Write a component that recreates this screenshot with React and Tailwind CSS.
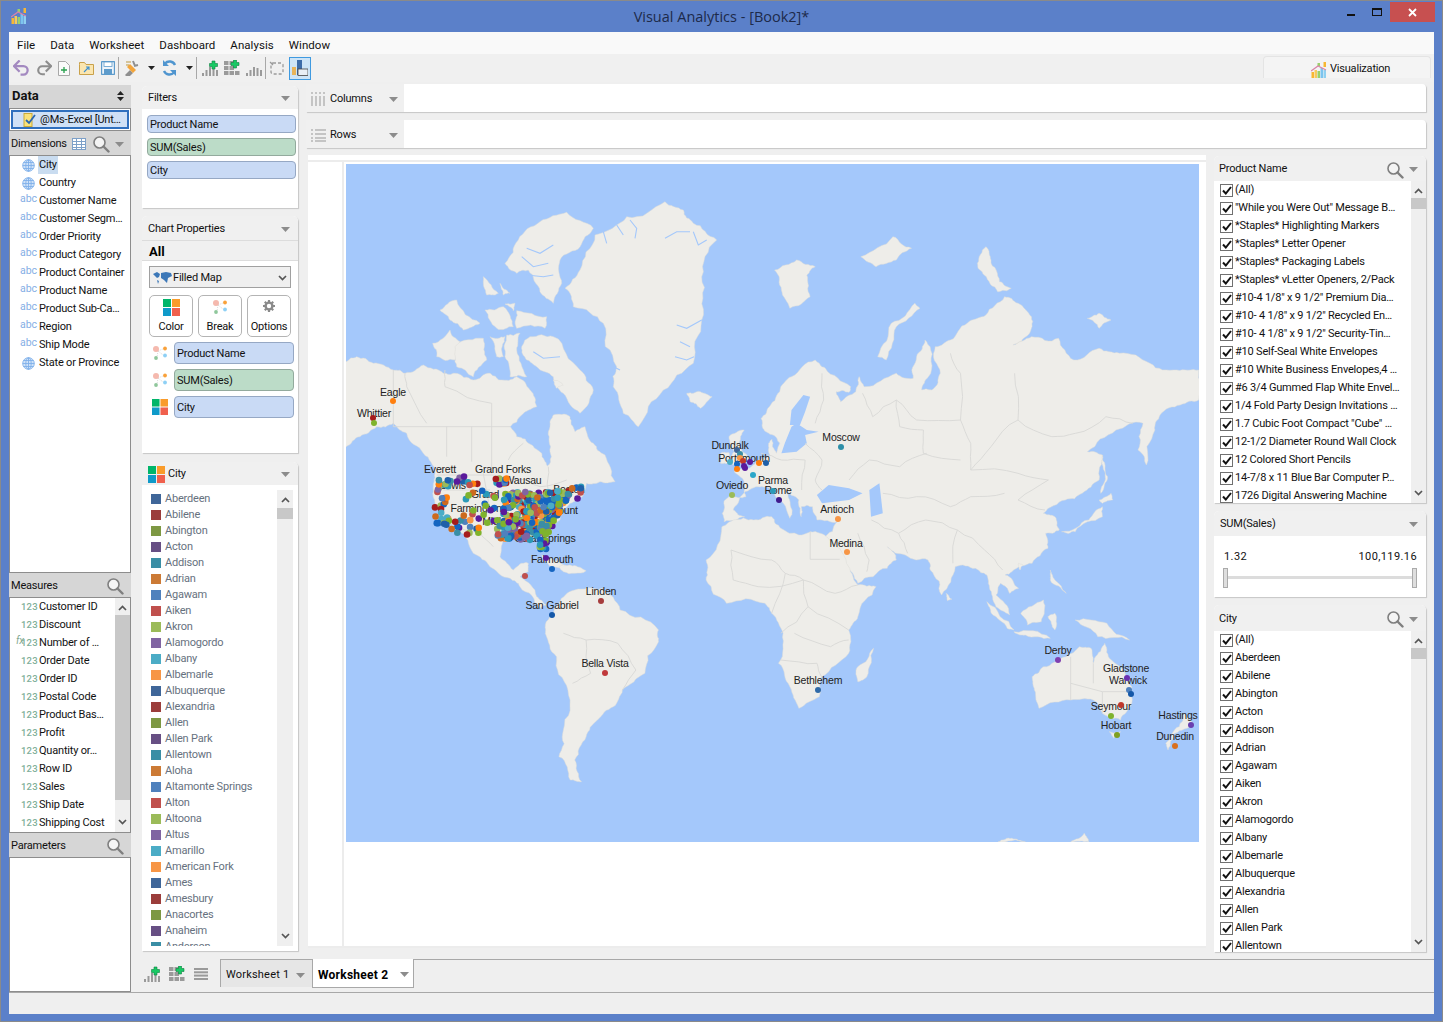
import React from 'react';

const z6 = (p) => p.map(([x, y]) => [340 + x / 3, 160 + y / 3]);
const z7 = (p) => p.map(([x, y]) => [400 + x / 3, 440 + y / 3]);
const z9 = (p) => p.map(([x, y]) => [680 + x * 0.338, 160 + y / 3]);
const z10 = (p) => p.map(([x, y]) => [500 + x * 0.4529, 500 + y / 3]);
const pts = (p) => p.map(([x, y]) => `${x.toFixed(1)},${y.toFixed(1)}`).join(' ');

const makeRnd = (start) => {
  let seed = start;
  return () => {
    seed = (seed * 16807) % 2147483647;
    return seed / 2147483647;
  };
};

// breaks straight edges into a coast-like line, same result on every run
const rough = (p, closed, levels, amp, rnd) => {
  let cur = p;
  for (let l = 0; l < levels; l++) {
    const next = [];
    const n = closed ? cur.length : cur.length - 1;
    for (let i = 0; i < n; i++) {
      const a = cur[i];
      const b = cur[(i + 1) % cur.length];
      const dx = b[0] - a[0];
      const dy = b[1] - a[1];
      const k = (rnd() - 0.5) * 2 * amp;
      next.push(a, [(a[0] + b[0]) / 2 - dy * k, (a[1] + b[1]) / 2 + dx * k]);
    }
    if (!closed) next.push(cur[cur.length - 1]);
    cur = next;
  }
  return cur;
};

const LAND_SHAPES = [
  // north + central america
  [
    ...z6([[18, 605], [50, 590], [100, 610], [160, 630], [195, 640], [250, 615], [310, 640], [345, 640], [400, 660], [450, 640], [480, 660], [530, 650], [570, 690], [590, 740], [545, 765], [510, 800], [530, 830], [575, 855], [605, 880], [622, 918], [632, 860], [630, 800], [640, 765], [690, 770], [705, 815], [735, 800], [760, 850], [795, 885], [825, 965]]),
    ...z7([[600, 125], [560, 130], [550, 165], [510, 190], [480, 240], [450, 270], [430, 290], [445, 335], [425, 310], [405, 285], [350, 290], [310, 300], [300, 350], [340, 390], [375, 368], [385, 370], [385, 395], [360, 410], [410, 470], [440, 495], [420, 505], [360, 440], [330, 415], [270, 380], [220, 340], [175, 270], [135, 240], [105, 190], [100, 150], [105, 100]]),
    ...z6([[250, 880], [200, 820], [160, 790], [110, 800], [60, 830], [18, 860]]),
  ],
  z7([[425, 345], [480, 368], [525, 392], [470, 382], [430, 362]]),
  z10([[130, 200], [160, 198], [190, 212], [140, 215]]),
  // south america
  z10([[100, 375], [130, 310], [165, 270], [225, 265], [265, 330], [350, 390], [350, 425], [320, 520], [270, 570], [250, 620], [215, 660], [190, 710], [165, 780], [180, 845], [155, 840], [130, 770], [140, 690], [150, 570], [125, 470], [100, 400]]),
  // greenland
  z6([[675, 385], [720, 330], [765, 225], [860, 170], [975, 125], [1030, 150], [1060, 190], [1130, 240], [1085, 350], [1085, 480], [1060, 610], [970, 690], [895, 800], [850, 760], [820, 680], [830, 620], [790, 490], [700, 440]]),
  // canadian arctic
  z6([[495, 310], [535, 240], [600, 185], [680, 157], [760, 205], [720, 260], [660, 300], [665, 370], [640, 430], [600, 395], [565, 330], [530, 340]]),
  z6([[300, 450], [350, 420], [420, 490], [370, 510], [330, 480]]),
  z6([[278, 550], [330, 510], [360, 545], [345, 600], [290, 590]]),
  z6([[345, 560], [430, 535], [440, 600], [400, 650], [350, 620]]),
  z6([[430, 350], [475, 400], [440, 405]]),
  z6([[480, 370], [510, 400], [490, 405]]),
  z6([[435, 450], [490, 440], [520, 500], [470, 505]]),
  z6([[495, 432], [525, 430], [520, 452]]),
  z6([[530, 452], [620, 470], [615, 505], [530, 505]]),
  z6([[450, 530], [495, 530], [490, 590], [470, 590]]),
  z6([[500, 525], [540, 520], [530, 570], [560, 650], [510, 650], [495, 590]]),
  z6([[545, 560], [570, 530], [640, 530], [720, 630], [760, 690], [720, 760], [670, 700], [640, 650], [590, 620], [560, 600]]),
  z6([[640, 660], [670, 675], [650, 685]]),
  // eurasia
  [
    ...z9([[130, 1025], [150, 1005], [195, 1010], [190, 965], [160, 935], [205, 925], [225, 905], [265, 885], [262, 850], [272, 838], [285, 880], [295, 850], [275, 825], [245, 805], [240, 775], [260, 745], [295, 695], [330, 650], [400, 600], [430, 625], [505, 680], [500, 697], [462, 695], [475, 725], [520, 695], [530, 650], [545, 680], [640, 640], [690, 655], [700, 590], [725, 540], [740, 560], [735, 650], [715, 690], [745, 690], [770, 640], [755, 560], [800, 540], [850, 490], [905, 465], [960, 410], [1000, 430], [1040, 470], [1030, 525], [985, 555], [1040, 530], [1120, 535], [1165, 600], [1240, 565], [1300, 580], [1390, 610], [1470, 630], [1535, 630], [1535, 720], [1480, 735], [1420, 765], [1405, 810], [1380, 915], [1355, 870], [1370, 790], [1290, 810], [1205, 875], [1250, 885], [1240, 960], [1190, 1000], [1140, 1020], [1075, 1060]]),
    ...z10([[1225, 50], [1235, 90], [1220, 100], [1205, 100], [1210, 145], [1175, 190], [1130, 215], [1115, 225], [1145, 265], [1125, 280], [1105, 250], [1095, 285], [1125, 345], [1105, 330], [1085, 275], [1075, 225], [1050, 205], [1005, 200], [975, 285], [950, 210], [945, 180], [895, 165], [855, 140], [875, 180], [855, 205], [790, 250], [760, 195], [740, 150], [715, 115], [745, 65], [700, 60], [690, 20], [665, 20], [665, 50], [660, 0], [630, -30], [645, 30], [640, 55], [600, -30], [570, -40], [535, -15], [515, 30], [540, 50], [495, 65], [495, 15]]),
  ],
  z9([[145, 830], [190, 810], [175, 850], [205, 895], [190, 908], [130, 908], [160, 875]]),
  z9([[120, 880], [145, 878], [142, 910], [120, 910]]),
  z9([[20, 700], [60, 695], [95, 710], [60, 745], [30, 725]]),
  z9([[280, 330], [345, 300], [400, 320], [375, 345], [385, 410], [325, 445], [300, 390]]),
  z9([[535, 290], [630, 230], [685, 265], [640, 300], [580, 320]]),
  z9([[585, 590], [625, 490], [695, 430], [710, 445], [640, 500], [610, 600]]),
  z9([[880, 310], [905, 260], [920, 300], [945, 365], [980, 385], [940, 395], [900, 345]]),
  z9([[1205, 475], [1240, 460], [1275, 480], [1240, 505]]),
  z9([[1250, 885], [1265, 950], [1245, 1000], [1258, 950]]),
  z9([[1240, 1020], [1275, 1000], [1280, 1020], [1250, 1030]]),
  z10([[1240, 95], [1300, 60], [1330, 20], [1330, 50], [1270, 95]]),
  // africa + madagascar
  z10([[455, 180], [490, 80], [515, 60], [560, 60], [600, 50], [620, 85], [660, 105], [685, 95], [725, 115], [765, 190], [790, 255], [830, 260], [790, 350], [770, 390], [770, 460], [710, 530], [705, 590], [660, 625], [640, 560], [615, 490], [625, 400], [600, 340], [585, 310], [500, 310], [455, 240]]),
  z10([[790, 500], [825, 445], [810, 530], [790, 545]]),
  // australasia
  z10([[1175, 530], [1200, 500], [1250, 470], [1280, 440], [1305, 445], [1310, 490], [1330, 440], [1335, 430], [1350, 480], [1395, 560], [1395, 610], [1370, 660], [1330, 640], [1310, 600], [1260, 600], [1190, 625], [1180, 570]]),
  z10([[1345, 695], [1370, 695], [1355, 715]]),
  z10([[1510, 640], [1530, 670], [1490, 700], [1475, 750], [1470, 730], [1500, 680]]),
  z10([[1075, 305], [1135, 390], [1120, 385], [1085, 340]]),
  z10([[1135, 395], [1215, 415], [1160, 405]]),
  z10([[1150, 340], [1200, 300], [1195, 365], [1165, 375]]),
  z10([[1210, 350], [1225, 340], [1225, 390]]),
  z10([[1270, 360], [1340, 370], [1390, 420], [1320, 410]]),
  z10([[1215, 210], [1225, 240], [1250, 280], [1215, 240]]),
  z10([[985, 280], [998, 298], [988, 302]]),
  z10([[1145, 190], [1155, 195], [1148, 210]]),
  z10([[1100, 1025], [1130, 1015], [1160, 1025]]),
  z10([[1260, 1025], [1290, 1000], [1300, 1025]]),
];

const WATER = [
  z9([[300, 880], [345, 875], [375, 850], [370, 825], [410, 815], [375, 810], [345, 790], [330, 800], [310, 850]]),
  z9([[325, 795], [330, 750], [365, 705], [385, 710], [370, 755], [355, 795]]),
  z9([[405, 1005], [440, 975], [500, 985], [540, 1000], [500, 1020], [420, 1030]]),
  z9([[560, 990], [590, 970], [600, 1060], [565, 1070]]),
];

// water-coloured inlets cut into the coasts
const FJORDS = [
  z6([[975, 235], [1010, 215], [1050, 215]]),
  z6([[870, 180], [890, 205], [885, 235]]),
  z6([[830, 195], [850, 225]]),
  z6([[790, 215], [800, 250]]),
  z6([[1060, 215], [1075, 255], [1100, 240]]),
  z6([[1005, 590], [1040, 600], [1062, 590]]),
  z6([[1020, 545], [1050, 560]]),
  z6([[1010, 495], [1040, 505], [1085, 480]]),
  z6([[810, 615], [840, 630]]),
  z6([[560, 265], [600, 280], [640, 255]]),
  z6([[545, 290], [580, 320], [625, 310]]),
  z6([[560, 345], [610, 350], [640, 345]]),
  z6([[580, 575], [610, 595], [660, 590]]),
];

const STRAIGHT_BORDERS = [
  z6([[160, 630], [160, 800], [510, 800]]),
  z6([[320, 800], [320, 890]]),
  z6([[395, 800], [395, 905]]),
  z6([[455, 730], [455, 940]]),
  z6([[290, 945], [460, 945]]),
  z7([[130, 150], [270, 150]]),
  z7([[250, 100], [270, 210]]),
  z10([[685, 95], [685, 178], [750, 178]]),
  z10([[1260, 470], [1260, 600]]),
  z10([[1260, 550], [1330, 575], [1395, 575]]),
  z10([[1330, 575], [1330, 640]]),
  z10([[1310, 490], [1310, 550]]),
];

const WAVY_BORDERS = [
  z6([[315, 630], [315, 680], [455, 730]]),
  z6([[195, 640], [200, 680], [260, 790]]),
  z6([[505, 900], [550, 850]]),
  z6([[625, 920], [625, 990]]),
  z6([[460, 945], [560, 960], [600, 980], [680, 960]]),
  z7([[120, 235], [180, 265], [240, 280], [280, 320]]),
  z9([[420, 640], [425, 720], [400, 790]]),
  z9([[370, 850], [420, 900], [400, 960], [420, 990]]),
  z9([[540, 700], [570, 770], [640, 720], [700, 780], [830, 780], [860, 850], [860, 930]]),
  z9([[640, 720], [650, 800], [720, 810], [720, 880], [830, 900]]),
  z9([[990, 640], [1000, 780], [1100, 830], [1170, 820], [1260, 770], [1340, 790]]),
  z9([[830, 780], [830, 640], [800, 580]]),
  z9([[1000, 780], [920, 860], [860, 930], [1000, 940], [1090, 960], [1000, 1020], [1080, 1050]]),
  z9([[500, 960], [560, 900], [650, 920], [730, 880]]),
  z9([[600, 1000], [700, 1010], [800, 1040], [860, 1010], [960, 1000]]),
  z9([[240, 880], [300, 900], [370, 900], [360, 990]]),
  z10([[820, 60], [880, 100], [940, 60], [1010, 90], [1070, 150], [1110, 210]]),
  z10([[880, 100], [900, 160]]),
  z10([[1010, 90], [1000, 190]]),
  z10([[790, 100], [815, 180], [810, 215]]),
  z10([[510, 150], [600, 180], [630, 220], [600, 340]]),
  z10([[510, 150], [515, 240], [570, 260], [670, 240], [740, 280], [790, 255]]),
  z10([[630, 220], [670, 240], [680, 320], [620, 400]]),
  z10([[680, 320], [770, 390]]),
  z10([[620, 480], [700, 490], [710, 530]]),
  z10([[650, 400], [730, 440], [770, 420]]),
  z10([[140, 400], [190, 420], [200, 520], [160, 550]]),
  z10([[190, 420], [260, 430], [300, 510], [270, 570]]),
];

const coastRnd = makeRnd(4099);
const LAND = LAND_SHAPES.map((p) => rough(p, true, 3, 0.13, coastRnd));
const BORDERS = [...STRAIGHT_BORDERS, ...WAVY_BORDERS.map((p) => rough(p, false, 2, 0.08, coastRnd))];

const DOT_COLORS = ['#1565c0', '#ff7f0e', '#a61c1c', '#5a1a9c', '#7fb32d', '#2b9ab8', '#c0504d', '#4f81bd', '#f79646', '#8064a2', '#9bbb59', '#1f5fa8', '#cc6a1e', '#3a8ea5', '#2b9ab8', '#7fb32d', '#1565c0', '#4bacc6'];

// a fixed scatter for the dense city cluster over the US
const buildUsDots = () => {
  const rnd = makeRnd(73);
  const out = [];
  const add = (n, x0, x1, y0, y1, test) => {
    let made = 0;
    while (made < n) {
      const x = x0 + rnd() * (x1 - x0);
      const y = y0 + rnd() * (y1 - y0);
      if (test && !test(x, y)) continue;
      out.push([400 + x / 3, 440 + y / 3, DOT_COLORS[Math.floor(rnd() * DOT_COLORS.length)]]);
      made++;
    }
  };
  add(22, 105, 145, 130, 250);
  add(14, 130, 240, 235, 280);
  add(14, 115, 235, 108, 140);
  add(22, 190, 300, 150, 285);
  add(12, 270, 320, 115, 135);
  add(250, 310, 510, 155, 300, (x, y) => x < 515 - (y - 155) * 0.55 && y < 305 - (x - 310) * 0.05);
  add(26, 290, 340, 240, 300);
  add(14, 460, 550, 140, 185, (x, y) => y > 130 + (550 - x) * 0.3);
  add(14, 418, 440, 285, 332);
  return out;
};

const MAP_DOTS = [
  [393, 401, '#ff7f0e'], [373, 418, '#a61c1c'], [374, 423, '#7fb32d'],
  [737, 450, '#3f6699'], [740, 454, '#3a8ea5'], [732, 495, '#9bbb59'], [730, 462, '#4bacc6'],
  [737, 464, '#1565c0'], [740, 458, '#f79646'], [743, 461, '#c0392b'], [744, 466, '#5a1a9c'], [750, 462, '#5a1a9c'], [745, 468, '#5a1a9c'], [737, 469, '#ff7f0e'], [759, 463, '#ff7f0e'], [766, 463, '#1f5fa8'], [753, 475, '#2ba6c9'], [773, 491, '#2b9ab8'], [779, 500, '#3f1a8c'],
  [841, 447, '#2e8fa8'], [838, 519, '#f79646'], [847, 552, '#f79646'],
  [552, 569, '#1565c0'], [546, 558, '#5a1a9c'], [525, 576, '#c0504d'], [601, 601, '#a63d3d'], [552, 615, '#1558a8'], [605, 673, '#c0393b'], [818, 690, '#2f6aa8'],
  [1058, 660, '#8040b0'], [1127, 678, '#6a30b0'], [1129, 690, '#4f81bd'], [1131, 694, '#1558a8'], [1121, 705, '#c0392b'], [1111, 716, '#7fb32d'], [1117, 735, '#7fa020'], [1191, 725, '#6a40b0'], [1175, 746, '#d9701e'],
];

const MAP_LABELS = [
  ['Eagle', 393, 396], ['Whittier', 374, 417], ['Everett', 440, 473], ['Grand Forks', 503, 473], ['Wausau', 523, 484],
  ['Lewis', 453, 489], ['Grand', 485, 498], ['Boston', 569, 493], ['Farmington', 476, 512], ['Paramount', 553, 514],
  ['Midland', 500, 525], ['Coral Springs', 545, 542], ['Falmouth', 552, 563], ['Linden', 601, 595], ['San Gabriel', 552, 609],
  ['Bella Vista', 605, 667], ['Dundalk', 730, 449], ['Portsmouth', 744, 462], ['Oviedo', 732, 489], ['Parma', 773, 484],
  ['Rome', 778, 494], ['Moscow', 841, 441], ['Antioch', 837, 513], ['Medina', 846, 547], ['Bethlehem', 818, 684],
  ['Derby', 1058, 654], ['Gladstone', 1126, 672], ['Warwick', 1128, 684], ['Seymour', 1111, 710], ['Hobart', 1116, 729],
  ['Hastings', 1178, 719], ['Dunedin', 1175, 740],
];

const WorldMap = () => {
  const usDots = buildUsDots();
  return (
    <svg viewBox="346 164 853 678" className="block w-[853px] h-[678px]">
      <rect x="346" y="164" width="853" height="678" fill="#a4c8fb" />
      {LAND.map((p, i) => (
        <polygon key={i} points={pts(p)} fill="#eeede9" stroke="#dcdcd8" strokeWidth="0.5" strokeLinejoin="round" />
      ))}
      {WATER.map((p, i) => (
        <polygon key={i} points={pts(p)} fill="#a4c8fb" />
      ))}
      {FJORDS.map((p, i) => (
        <polyline key={i} points={pts(p)} fill="none" stroke="#a4c8fb" strokeWidth="1.1" />
      ))}
      {BORDERS.map((p, i) => (
        <polyline key={i} points={pts(p)} fill="none" stroke="#d8d8d6" strokeWidth="0.9" />
      ))}
      {MAP_LABELS.map(([t, x, y]) => (
        <text key={t} x={x} y={y} textAnchor="middle" fontSize="10.5" fill="#222" fontFamily="'Liberation Sans', sans-serif">
          {t}
        </text>
      ))}
      {usDots.map(([x, y, c], i) => (
        <circle key={i} cx={x} cy={y} r="3.3" fill={c} />
      ))}
      {MAP_DOTS.map(([x, y, c], i) => (
        <circle key={i} cx={x} cy={y} r="3" fill={c} />
      ))}
    </svg>
  );
};

const Caret = ({ className = '' }) => (
  <svg width="9" height="5" viewBox="0 0 9 5" className={className}>
    <path d="M0 0h9L4.5 5z" fill="#8c8c8c" />
  </svg>
);

const Search = () => (
  <svg width="18" height="18" viewBox="0 0 18 18" fill="none">
    <circle cx="7.5" cy="7.5" r="5.5" stroke="#7f7f7f" strokeWidth="1.6" fill="#f4f4f4" />
    <path d="M11.5 11.5l5 5" stroke="#7f7f7f" strokeWidth="2.4" strokeLinecap="round" />
  </svg>
);

const Chevron = ({ up }) => (
  <svg width="9" height="6" viewBox="0 0 9 6" fill="none">
    <path d={up ? 'M1 5l3.5-3.5L8 5' : 'M1 1l3.5 3.5L8 1'} stroke="#555" strokeWidth="1.7" />
  </svg>
);

const Globe = () => (
  <svg width="13" height="13" viewBox="0 0 13 13" fill="none" stroke="#7fb0ea" strokeWidth="0.9">
    <circle cx="6.5" cy="6.5" r="5.8" fill="#cfe2f8" />
    <ellipse cx="6.5" cy="6.5" rx="2.7" ry="5.8" />
    <path d="M6.5.7v11.6M.7 6.5h11.6M1.5 3.5h10M1.5 9.5h10" />
  </svg>
);

const ColorIcon = ({ size = 17 }) => (
  <svg width={size} height={size} viewBox="0 0 17 17">
    <rect width="8" height="8" fill="#00b56a" />
    <rect x="9" width="8" height="8" fill="#f99b2a" />
    <rect y="9" width="8" height="8" fill="#0f9ac9" />
    <rect x="9" y="9" width="8" height="8" fill="#f0604d" />
  </svg>
);

const BreakIcon = () => (
  <svg width="16" height="16" viewBox="0 0 16 16">
    <path d="M6 6l5-2M6 6l5 4M6 6l-1 6" stroke="#ccc" strokeWidth="0.7" strokeDasharray="1 1" />
    <circle cx="4" cy="4" r="3" fill="#f5b9ae" />
    <circle cx="13" cy="3.5" r="1.9" fill="#f9a13a" />
    <circle cx="13" cy="10.5" r="1.9" fill="#8ed0f5" />
    <circle cx="4" cy="13" r="1.9" fill="#8fc79b" />
  </svg>
);

const GearIcon = () => (
  <svg width="14" height="14" viewBox="0 0 14 14">
    <path d="M7 1v2M7 11v2M1 7h2M11 7h2M2.8 2.8l1.4 1.4M9.8 9.8l1.4 1.4M2.8 11.2l1.4-1.4M9.8 4.2l1.4-1.4" stroke="#8a8a8a" strokeWidth="2.2" />
    <circle cx="7" cy="7" r="3.4" fill="none" stroke="#8a8a8a" strokeWidth="2.4" />
  </svg>
);

const AppIcon = ({ size = 16 }) => (
  <svg width={size} height={size} viewBox="0 0 16 16">
    <rect x="0.500" y="10" width="2.500" height="6" fill="#f7b733" />
    <rect x="3.500" y="8" width="2.500" height="8" fill="#f7c95e" />
    <rect x="6.500" y="9" width="2.500" height="7" fill="#9ad06c" />
    <rect x="9.500" y="6" width="2.500" height="10" fill="#7cc4ee" />
    <rect x="12.500" y="8" width="2.500" height="8" fill="#8fd0f0" />
    <rect x="12.500" y="0" width="2.500" height="5" fill="#f7b733" />
    <rect x="6.500" y="1" width="2.500" height="3" fill="#9ad06c" />
    <path d="M0 9l7-5 8 4" fill="none" stroke="#d984a8" strokeWidth="1.300" />
  </svg>
);

const BarsAdd = ({ gray }) => (
  <svg width="16" height="16" viewBox="0 0 16 16">
    <rect x="0" y="13" width="2" height="3" fill="#9a9a9a" />
    <rect x="3.500" y="10" width="2" height="6" fill="#9a9a9a" />
    <rect x="7" y="7" width="2" height="9" fill="#9a9a9a" />
    <rect x="10.500" y="8" width="2" height="8" fill="#9a9a9a" />
    <rect x="14" y="10" width="2" height="6" fill="#9a9a9a" />
    {!gray && <path d="M10 1h3v2.500h2.500v3H13V9h-3V6.500H7.500v-3H10z" fill="#18c964" stroke="#0d7f3f" strokeWidth="0.6" />}
  </svg>
);

const GridAdd = () => (
  <svg width="16" height="16" viewBox="0 0 16 16" fill="#9a9a9a">
    <rect x="0" y="1" width="4.500" height="4" />
    <rect x="5.500" y="1" width="4.500" height="4" />
    <rect x="0" y="6" width="4.500" height="4" />
    <rect x="5.500" y="6" width="4.500" height="4" />
    <rect x="0" y="11" width="4.500" height="4" />
    <rect x="5.500" y="11" width="4.500" height="4" />
    <rect x="11" y="11" width="4.500" height="4" />
    <path d="M9.500 0h3v2.500H15v3h-2.500V8h-3V5.500H7v-3h2.500z" fill="#18c964" stroke="#0d7f3f" strokeWidth="0.6" />
  </svg>
);

const DropArrow = () => (
  <svg width="7" height="4" viewBox="0 0 7 4">
    <path d="M0 0h7L3.500 4z" fill="#222" />
  </svg>
);

const Sep = () => <div className="w-px h-[22px] bg-[#a8a8a8] mx-[3px]" />;

const Toolbar = () => (
  <div className="h-[28px] flex items-center bg-[#f0f0f0] pl-[4px] relative">
    <svg width="17" height="16" viewBox="0 0 18 16" fill="none">
      <path d="M2 6h9a4.500 4.500 0 010 9H8" stroke="#a389c0" strokeWidth="2.400" />
      <path d="M7 0L1 6l6 6" stroke="#a389c0" strokeWidth="2.400" />
    </svg>
    <svg width="16" height="16" viewBox="0 0 18 16" fill="none" className="ml-[6px]">
      <path d="M16 6H7a4.500 4.500 0 000 9h3" stroke="#8d8d8d" strokeWidth="2.400" />
      <path d="M11 0l6 6-6 6" stroke="#8d8d8d" strokeWidth="2.400" />
    </svg>
    <svg width="12" height="15" viewBox="0 0 12 15" className="ml-[6px]">
      <path d="M.5.500h7l4 4v10H.500z" fill="#fafafa" stroke="#a8a8a8" />
      <path d="M6 6v6M3 9h6" stroke="#27a04d" strokeWidth="1.300" />
    </svg>
    <svg width="15" height="13" viewBox="0 0 15 13" className="ml-[9px]">
      <path d="M.5 2.500V.5h5l1.500 2h7.500v10H.500z" fill="#fbe6b0" stroke="#c9a14a" />
      <path d="M5 10l5-5M7 5h3v3" fill="none" stroke="#3c8fd0" strokeWidth="1.100" />
    </svg>
    <svg width="14" height="14" viewBox="0 0 14 14" className="ml-[7px]">
      <rect x="0.500" y="0.500" width="13" height="13" rx="1" fill="#eef4fa" stroke="#5d9bcb" strokeWidth="1.400" />
      <rect x="3" y="1" width="8" height="4.500" fill="#fff" stroke="#5d9bcb" strokeWidth="0.800" />
      <rect x="3" y="8" width="8" height="5.500" fill="#5d9bcb" />
    </svg>
    <Sep />
    <svg width="18" height="18" viewBox="0 0 18 18" className="ml-[1px]">
      <path d="M2 16l5-5 3 3-3 3H3z" fill="#8f8f8f" />
      <path d="M7 5l6 6-3 3-6-6z" fill="#f3a53b" />
      <path d="M10 2l2 5M15 6l-4 1" stroke="#8f8f8f" strokeWidth="2" />
      <path d="M3 3h5M3 6h3" stroke="#bb9a44" strokeWidth="1.200" />
    </svg>
    <div className="ml-[7px]"><DropArrow /></div>
    <svg width="15" height="16" viewBox="0 0 15 16" fill="none" className="ml-[7px]">
      <path d="M13 5A6 6 0 003 3.500" stroke="#4f95cf" strokeWidth="2.400" />
      <path d="M2 11a6 6 0 0010 1.500" stroke="#4f95cf" strokeWidth="2.400" />
      <path d="M1 0v6h6zM14 16v-6H8z" fill="#4f95cf" />
    </svg>
    <div className="ml-[9px]"><DropArrow /></div>
    <Sep />
    <div className="ml-[2px]"><BarsAdd /></div>
    <div className="ml-[6px]"><GridAdd /></div>
    <div className="ml-[6px]"><BarsAdd gray /></div>
    <Sep />
    <svg width="16" height="16" viewBox="0 0 16 16" fill="none">
      <rect x="2" y="3" width="12" height="11" rx="2" stroke="#9a9a9a" strokeDasharray="3 2" strokeWidth="1.300" />
      <path d="M1 2l3 3" stroke="#9a9a9a" strokeWidth="1.300" />
    </svg>
    <div className="ml-[4px] w-[22px] h-[23px] bg-[#cde4f7] border border-[#3f9ae0] flex items-center justify-center">
      <svg width="16" height="16" viewBox="0 0 16 16">
        <rect x="0" y="7" width="4" height="8" fill="#e8b45a" />
        <rect x="5" y="0" width="5" height="15" fill="#3d6ca8" />
        <rect x="6" y="9" width="10" height="6.500" fill="#e8eef5" stroke="#444" strokeWidth="0.800" />
      </svg>
    </div>
    <div className="absolute right-[3px] top-[2px] w-[168px] h-[22px] bg-[#f4f4f4] border-t border-l border-r border-[#e4e4e4] rounded-t-[4px] flex items-center pl-[47px] pt-[4px] gap-[3px]">
      <AppIcon />
      <span>Visualization</span>
    </div>
  </div>
);

const DIMENSIONS = [
  ['g', 'City'], ['g', 'Country'], ['a', 'Customer Name'], ['a', 'Customer Segm…'], ['a', 'Order Priority'], ['a', 'Product Category'],
  ['a', 'Product Container'], ['a', 'Product Name'], ['a', 'Product Sub-Ca…'], ['a', 'Region'], ['a', 'Ship Mode'], ['g', 'State or Province'],
];

const MEASURES = ['Customer ID', 'Discount', 'Number of …', 'Order Date', 'Order ID', 'Postal Code', 'Product Bas…', 'Profit', 'Quantity or…', 'Row ID', 'Sales', 'Ship Date', 'Shipping Cost'];

const SideHead = ({ children }) => (
  <div className="h-[24px] bg-[#d6d6d6] flex items-center pl-[2px] pr-[7px] pt-[2px] justify-between">{children}</div>
);

const DataPanel = () => (
  <div className="w-[122px] shrink-0 flex flex-col pt-[3px] bg-[#efefef] h-[910px]">
    <div className="h-[23px] bg-[#d6d6d6] flex items-center justify-between pl-[3px] pr-[7px] pb-px font-bold text-[13px] tracking-normal">
      Data
      <svg width="7" height="10" viewBox="0 0 7 10">
        <path d="M3.500 0L7 4H0zM3.500 10L0 6h7z" fill="#222" />
      </svg>
    </div>
    <div className="h-[23px] border border-[#8d8d8d] bg-white p-px">
      <div className="h-full border-2 border-[#2f6fbe] bg-[#cfe0f6] flex items-center pl-[10px] gap-[4px] pt-px">
        <svg width="13" height="14" viewBox="0 0 13 14">
          <rect x="1" y="0.500" width="8" height="13" fill="#f9e27a" stroke="#c9a93a" />
          <path d="M3 7l3 3 6-8" fill="none" stroke="#2866b0" strokeWidth="1.800" />
        </svg>
        <span className="whitespace-nowrap">@Ms-Excel [Unt…</span>
      </div>
    </div>
    <SideHead>
      <span className="flex items-center">
        Dimensions
        <svg width="14" height="12" viewBox="0 0 14 12" fill="none" stroke="#7da0c8" className="ml-[5px]">
          <rect x="0.500" y="0.500" width="13" height="11" fill="#fff" />
          <path d="M.5 3.500h13M.5 6.500h13M.5 9.500h13M4.500.5v11M9.500.5v11" />
        </svg>
        <span className="ml-[6px]"><Search /></span>
      </span>
      <Caret />
    </SideHead>
    <div className="h-[418px] bg-white border border-[#8d8d8d]">
      {DIMENSIONS.map(([kind, name], i) => (
        <div key={name} className="h-[18px] flex items-center whitespace-nowrap">
          <span className="w-[29px] pl-[12px] flex items-center shrink-0 text-[#85aee5] leading-none">
            {kind === 'g' ? <Globe /> : <span className="-ml-[2px] -mt-[3px] text-[10.500px] tracking-[0px]">abc</span>}
          </span>
          <span className={i === 0 ? 'bg-[#c9dcf0] -ml-px px-[1px] leading-[18px]' : ''}>{name}</span>
        </div>
      ))}
    </div>
    <SideHead>
      Measures
      <Search />
    </SideHead>
    <div className="h-[236px] bg-white border border-[#8d8d8d] flex">
      <div className="flex-1 min-w-0">
        {MEASURES.map((name, i) => (
          <div key={name} className="h-[18px] flex items-center relative whitespace-nowrap">
            {i === 2 && <span className="absolute left-[6px] -top-[1px] text-[10px] italic text-[#7fa890]">fx</span>}
            <span className="w-[29px] pl-[11px] text-[9.500px] tracking-[0.2px] text-[#7fb09a] font-medium shrink-0">123</span>
            {name}
          </div>
        ))}
      </div>
      <Scroll thumbTop={10} thumbH={185} w="w-[15px]" />
    </div>
    <SideHead>
      Parameters
      <Search />
    </SideHead>
    <div className="flex-1 bg-white border border-[#8d8d8d]" />
  </div>
);

const Scroll = ({ thumbTop, thumbH, w }) => (
  <div className={`${w} shrink-0 bg-[#efefef] relative flex flex-col items-center justify-between py-[7px]`}>
    <Chevron up />
    <div className="absolute left-0 right-0 bg-[#c8c8c8]" style={{ top: thumbTop + 7, height: thumbH }} />
    <Chevron />
  </div>
);

const Pill = ({ green, h = 'h-[18px]', children }) => (
  <div className={`${h} rounded-[4px] border flex items-center pl-[2px] pt-[2px] whitespace-nowrap ${green ? 'bg-[#bcdcc8] border-[#93aa9d]' : 'bg-[#c9daf5] border-[#96a8c4]'}`}>
    {children}
  </div>
);

const Card = ({ className = '', children }) => (
  <div className={`bg-white rounded-t-[5px] shadow-[1px_1px_1px_#c6c6c6] ${className}`}>{children}</div>
);

const CardHead = ({ h = 'h-[23px]', pt = 'pt-[2px]', children }) => (
  <div className={`${h} ${pt} bg-[#f0f0f0] flex items-center justify-between pl-[6px] pr-[8px] rounded-t-[5px]`}>{children}</div>
);

const CITIES = ['Aberdeen', 'Abilene', 'Abington', 'Acton', 'Addison', 'Adrian', 'Agawam', 'Aiken', 'Akron', 'Alamogordo', 'Albany', 'Albemarle', 'Albuquerque', 'Alexandria', 'Allen', 'Allen Park', 'Allentown', 'Aloha', 'Altamonte Springs', 'Alton', 'Altoona', 'Altus', 'Amarillo', 'American Fork', 'Ames', 'Amesbury', 'Anacortes', 'Anaheim', 'Anderson'];
const LEGEND_COLORS = ['#3f6699', '#9b3d3b', '#7d9843', '#674f84', '#3a8ea5', '#cc7a35', '#4f81bd', '#c0504d', '#9bbb59', '#8064a2', '#4bacc6', '#f79646'];

const PropButton = ({ icon, label }) => (
  <div className="w-[45px] h-[42px] border border-[#b4b4b4] rounded-[5px] flex flex-col items-center justify-between pt-[3px] pb-[1px]">
    {icon}
    <span>{label}</span>
  </div>
);

const PropsColumn = () => (
  <div className="w-[156px] shrink-0 flex flex-col pt-[4px]">
    <Card className="h-[122px]">
      <CardHead>
        Filters
        <Caret />
      </CardHead>
      <div className="pl-[5px] pr-[2px] pt-[6px] flex flex-col gap-[5px]">
        <Pill>Product Name</Pill>
        <Pill green>SUM(Sales)</Pill>
        <Pill>City</Pill>
      </div>
    </Card>
    <Card className="h-[237px] mt-[8px]">
      <CardHead h="h-[24px]">
        Chart Properties
        <Caret />
      </CardHead>
      <div className="h-[21px] bg-[#f0f0f0] border-y border-[#dcdcdc] flex items-center pl-[7px] pt-[2px] font-bold text-[13px] tracking-normal text-black">All</div>
      <div className="mx-[7px] mt-[5px] h-[22px] bg-[#efefef] border border-[#a0a0a0] flex items-center px-[3px] pt-[2px]">
        <svg width="19" height="12" viewBox="0 0 19 12" fill="#3d78b8">
          <path d="M0 2l4-2 3 2-1 3-2 1zM8 1l5-1 5 1 1 3-4 2-1 5-3-3-3-2zM4 8l2 1-1 3z" />
        </svg>
        <span className="ml-[1px]">Filled Map</span>
        <span className="ml-auto"><Chevron /></span>
      </div>
      <div className="flex gap-[5px] px-[7px] mt-[7px]">
        <PropButton icon={<ColorIcon />} label="Color" />
        <PropButton icon={<BreakIcon />} label="Break" />
        <PropButton icon={<GearIcon />} label="Options" />
      </div>
      <div className="flex flex-col gap-[5px] mt-[5px] pr-[4px]">
        <div className="flex items-center"><span className="w-[32px] pl-[10px]"><BreakIcon /></span><div className="flex-1"><Pill h="h-[22px]">Product Name</Pill></div></div>
        <div className="flex items-center"><span className="w-[32px] pl-[10px]"><BreakIcon /></span><div className="flex-1"><Pill green h="h-[22px]">SUM(Sales)</Pill></div></div>
        <div className="flex items-center"><span className="w-[32px] pl-[10px]"><ColorIcon size={16} /></span><div className="flex-1"><Pill h="h-[22px]">City</Pill></div></div>
      </div>
    </Card>
    <Card className="h-[489px] mt-[9px]">
      <CardHead pt="pt-px">
        <span className="flex items-center gap-[3px]"><ColorIcon />City</span>
        <Caret />
      </CardHead>
      <div className="h-[456px] mt-[5px] flex mr-[5px]">
        <div className="flex-1 overflow-hidden pl-[9px] pt-px">
          {CITIES.map((c, i) => (
            <div key={c} className="h-[16px] flex items-center gap-[4px] text-[#66717e] whitespace-nowrap">
              <span className="w-[10px] h-[10px] shrink-0" style={{ background: LEGEND_COLORS[i % 12] }} />
              {c}
            </div>
          ))}
        </div>
        <Scroll thumbTop={11} thumbH={11} w="w-[16px]" />
      </div>
    </Card>
  </div>
);

const Shelf = ({ icon, label }) => (
  <div className="h-[28px] flex bg-white shadow-[1px_1px_1px_#c6c6c6] rounded-t-[4px]">
    <div className="w-[98px] bg-[#f0f0f0] flex items-center pl-[5px] gap-[4px] pr-[6px] pt-[2px]">
      {icon}
      <span>{label}</span>
      <Caret className="ml-auto" />
    </div>
  </div>
);

const FilterRow = ({ label }) => (
  <div className="h-[18px] flex items-center whitespace-nowrap pl-[6px] gap-[2px]">
    <span className="w-[13px] h-[13px] border border-[#707070] bg-white flex items-center justify-center shrink-0">
      <svg width="10" height="9" viewBox="0 0 10 9" fill="none">
        <path d="M1 4.500L3.800 7.500 9 1" stroke="#111" strokeWidth="2" />
      </svg>
    </span>
    {label}
  </div>
);

const PRODUCTS = ['(All)', '"While you Were Out" Message B…', '*Staples* Highlighting Markers', '*Staples* Letter Opener', '*Staples* Packaging Labels', '*Staples* vLetter Openers, 2/Pack', '#10-4 1/8" x 9 1/2" Premium Dia…', '#10- 4 1/8" x 9 1/2" Recycled En…', '#10- 4 1/8" x 9 1/2" Security-Tin…', '#10 Self-Seal White Envelopes', '#10 White Business Envelopes,4 …', '#6 3/4 Gummed Flap White Envel…', '1/4 Fold Party Design Invitations …', '1.7 Cubic Foot Compact "Cube" …', '12-1/2 Diameter Round Wall Clock', '12 Colored Short Pencils', '14-7/8 x 11 Blue Bar Computer P…', '1726 Digital Answering Machine'];
const CITY_FILTER = ['(All)', 'Aberdeen', 'Abilene', 'Abington', 'Acton', 'Addison', 'Adrian', 'Agawam', 'Aiken', 'Akron', 'Alamogordo', 'Albany', 'Albemarle', 'Albuquerque', 'Alexandria', 'Allen', 'Allen Park', 'Allentown'];

const FilterCard = ({ title, items, head = 'h-[24px]', list = 'h-[323px]' }) => (
  <Card className="h-[347px]">
    <div className={`${head} bg-[#f0f0f0] flex items-center pl-[5px] pr-[8px] pt-[2px] rounded-t-[5px]`}>
      {title}
      <span className="ml-auto mr-[5px]"><Search /></span>
      <Caret />
    </div>
    <div className={`${list} flex`}>
      <div className="flex-1 min-w-0 overflow-hidden">
        {items.map((p) => <FilterRow key={p} label={p} />)}
      </div>
      <Scroll thumbTop={10} thumbH={11} w="w-[15px]" />
    </div>
  </Card>
);

const RangeCard = () => (
  <Card className="h-[86px] my-[8px]">
    <CardHead h="h-[25px]">
      SUM(Sales)
      <Caret />
    </CardHead>
    <div className="flex justify-between pl-[10px] pr-[9px] pt-[13px] tracking-[0.4px]">
      <span>1.32</span>
      <span>100,119.16</span>
    </div>
    <div className="mt-[2px] mx-[9px] h-[20px] relative flex items-center">
      <div className="w-full h-[3px] bg-[#dcdcdc]" />
      <div className="absolute left-0 top-0 w-[5px] h-[20px] bg-[#dedede] border border-[#aaa]" />
      <div className="absolute right-0 top-0 w-[5px] h-[20px] bg-[#dedede] border border-[#aaa]" />
    </div>
  </Card>
);

const TabBar = () => (
  <div className="h-[33px] flex items-start pl-[13px] bg-[#efefef]">
    <div className="flex items-center gap-[9px] pt-[7px] w-[76px] shrink-0">
      <BarsAdd />
      <GridAdd />
      <svg width="14" height="12" viewBox="0 0 14 12" fill="#9a9a9a">
        <rect width="14" height="2" />
        <rect y="3.300" width="14" height="2" />
        <rect y="6.600" width="14" height="2" />
        <rect y="10" width="14" height="2" />
      </svg>
    </div>
    <div className="w-[92px] h-[28px] bg-[#e6e6e6] border-l border-[#a8a8a8] border-t flex items-center pl-[5px] pr-[7px] pt-[3px] justify-between">
      <span className="tracking-[0.2px]">Worksheet 1</span>
      <Caret />
    </div>
    <div className="w-[102px] h-[29px] bg-white border border-t-0 border-[#a8a8a8] flex items-center pl-[5px] pr-[4px] pt-[3px] justify-between">
      <span className="font-bold text-[12px] tracking-[0.25px] text-black">Worksheet 2</span>
      <Caret />
    </div>
    <div className="flex-1 h-px bg-[#a8a8a8]" />
  </div>
);

export default function App() {
  return (
    <div className="w-[1443px] h-[1022px] bg-[#5b80c9] border border-[#8a8a8a] font-['Roboto',sans-serif] text-[11px] tracking-[-0.2px] text-[#111] flex flex-col overflow-hidden">
      <div className="h-[31px] shrink-0 relative flex items-center justify-center text-[14.500px] tracking-normal text-[#1d2a4a] font-['Open_Sans',sans-serif]">
        <div className="absolute left-[10px] top-[7px]"><AppIcon /></div>
        Visual Analytics - [Book2]*
        <div className="absolute left-[1346px] top-[13px] w-[8px] h-[2px] bg-[#111]" />
        <div className="absolute left-[1371px] top-[7px] w-[10px] h-[8px] border border-[#111] border-t-2" />
        <div className="absolute left-[1389px] top-[1px] w-[45px] h-[20px] bg-[#c75050] flex items-center justify-center">
          <svg width="9" height="9" viewBox="0 0 9 9">
            <path d="M1 1l7 7M8 1L1 8" stroke="#fff" strokeWidth="1.800" />
          </svg>
        </div>
      </div>
      <div className="mx-[8px] flex-1 min-h-0 flex flex-col bg-[#efefef]">
        <div className="h-[22px] shrink-0 bg-[#f9f9f9] flex items-center pl-[8px] gap-[15px] text-[11.500px] tracking-[0.05px] pt-[5px]">
          <span>File</span>
          <span>Data</span>
          <span>Worksheet</span>
          <span>Dashboard</span>
          <span>Analysis</span>
          <span>Window</span>
        </div>
        <Toolbar />
        <div className="flex">
          <DataPanel />
          <div className="flex-1 min-w-0 flex flex-col">
            <div className="h-[877px] flex pl-[11px]">
              <PropsColumn />
              <div className="w-[1120px] ml-[8px] pt-[2px] flex flex-col">
                <Shelf
                  label="Columns"
                  icon={
                    <svg width="15" height="14" viewBox="0 0 15 14" fill="#c4c4c4">
                      <path d="M0 0h2v2H0zM4 0h2v2H4zM8 0h2v2H8zM12 0h2v2h-2zM0 4h2v10H0zM4 4h2v10H4zM8 4h2v10H8zM12 4h2v10h-2z" />
                    </svg>
                  }
                />
                <div className="mt-[8px]">
                  <Shelf
                    label="Rows"
                    icon={
                      <svg width="15" height="14" viewBox="0 0 15 14" fill="#c4c4c4">
                        <path d="M0 1h2v2H0zM4 1h11v2H4zM0 5h2v2H0zM4 5h11v2H4zM0 9h2v2H0zM4 9h11v2H4zM0 12h2v2H0zM4 12h11v2H4z" />
                      </svg>
                    }
                  />
                </div>
                <div className="flex mt-[7px] flex-1 min-h-0">
                  <div className="w-[898px] h-[793px] ml-[2px] bg-white pt-[5px] shrink-0">
                    <div className="h-[788px] border-y-2 border-[#ececec] flex">
                      <div className="w-[36px] border-r-2 border-[#ececec] shrink-0" />
                      <div className="pl-[2px] pt-[2px]"><WorldMap /></div>
                    </div>
                  </div>
                  <div className="w-[212px] ml-[8px] shrink-0 pt-px">
                    <FilterCard title="Product Name" items={PRODUCTS} head="h-[25px]" list="h-[322px]" />
                    <RangeCard />
                    <FilterCard title="City" items={CITY_FILTER} head="h-[26px]" list="h-[321px]" />
                  </div>
                </div>
              </div>
            </div>
            <TabBar />
          </div>
        </div>
        <div className="flex-1 border-t border-[#a8a8a8]" />
      </div>
      <div className="h-[7px] shrink-0" />
    </div>
  );
}
